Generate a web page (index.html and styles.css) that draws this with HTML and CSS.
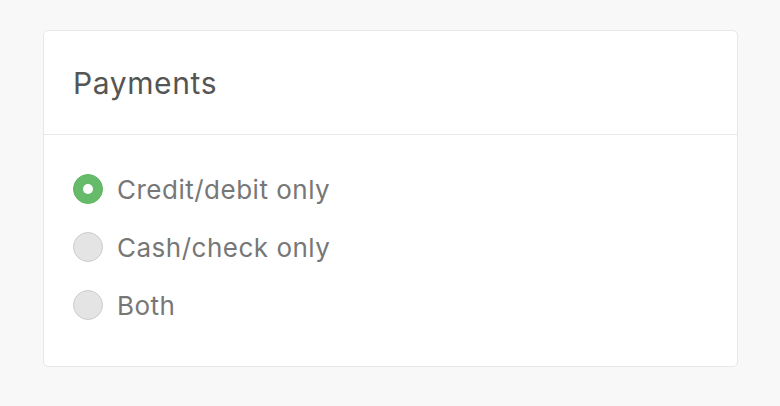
FILE: index.html
```html
<!DOCTYPE html>
<html>
<head>
<meta charset="utf-8">
<link rel="stylesheet" href="styles.css">
</head>
<body>
<div class="card">
  <div class="card-header">
    <h2 class="title">Payments</h2>
  </div>
  <div class="card-body">
    <label class="option">
      <span class="radio checked"></span>
      <span class="label">Credit/debit only</span>
    </label>
    <label class="option">
      <span class="radio"></span>
      <span class="label">Cash/check only</span>
    </label>
    <label class="option">
      <span class="radio"></span>
      <span class="label">Both</span>
    </label>
  </div>
</div>
</body>
</html>
```
FILE: styles.css
```css
html, body {
  margin: 0;
  padding: 0;
  background: #f7f8f7;
  font-family: "Inter", "Noto Sans", sans-serif;
}
body {
  padding: 30px 42px 0 43px;
}
.card {
  width: 695px;
  height: 337px;
  box-sizing: border-box;
  background: #fff;
  border: 1px solid #e6e8e6;
  border-radius: 5px;
  display: flex;
  flex-direction: column;
}
.card-header {
  height: 104px;
  box-sizing: border-box;
  padding: 0 29px;
  display: flex;
  align-items: center;
  border-bottom: 1px solid #e8e8e8;
}
.title {
  margin: 0;
  font-size: 30px;
  font-weight: 400;
  color: #555;
  letter-spacing: 0.6px;
}
.card-body {
  padding: 25px 29px 0;
  display: flex;
  flex-direction: column;
}
.option {
  height: 58px;
  display: flex;
  align-items: center;
  gap: 14px;
}
.radio {
  width: 30px;
  height: 30px;
  box-sizing: border-box;
  border-radius: 50%;
  background: #e4e4e4;
  border: 1px solid #cdcdcd;
  display: flex;
  align-items: center;
  justify-content: center;
}
.radio.checked {
  background: #66bb6a;
  border-color: #5fb563;
}
.radio.checked::after {
  content: "";
  width: 10px;
  height: 10px;
  border-radius: 50%;
  background: #fff;
}
.label {
  font-size: 26px;
  color: #777;
  letter-spacing: 0.5px;
}
```
